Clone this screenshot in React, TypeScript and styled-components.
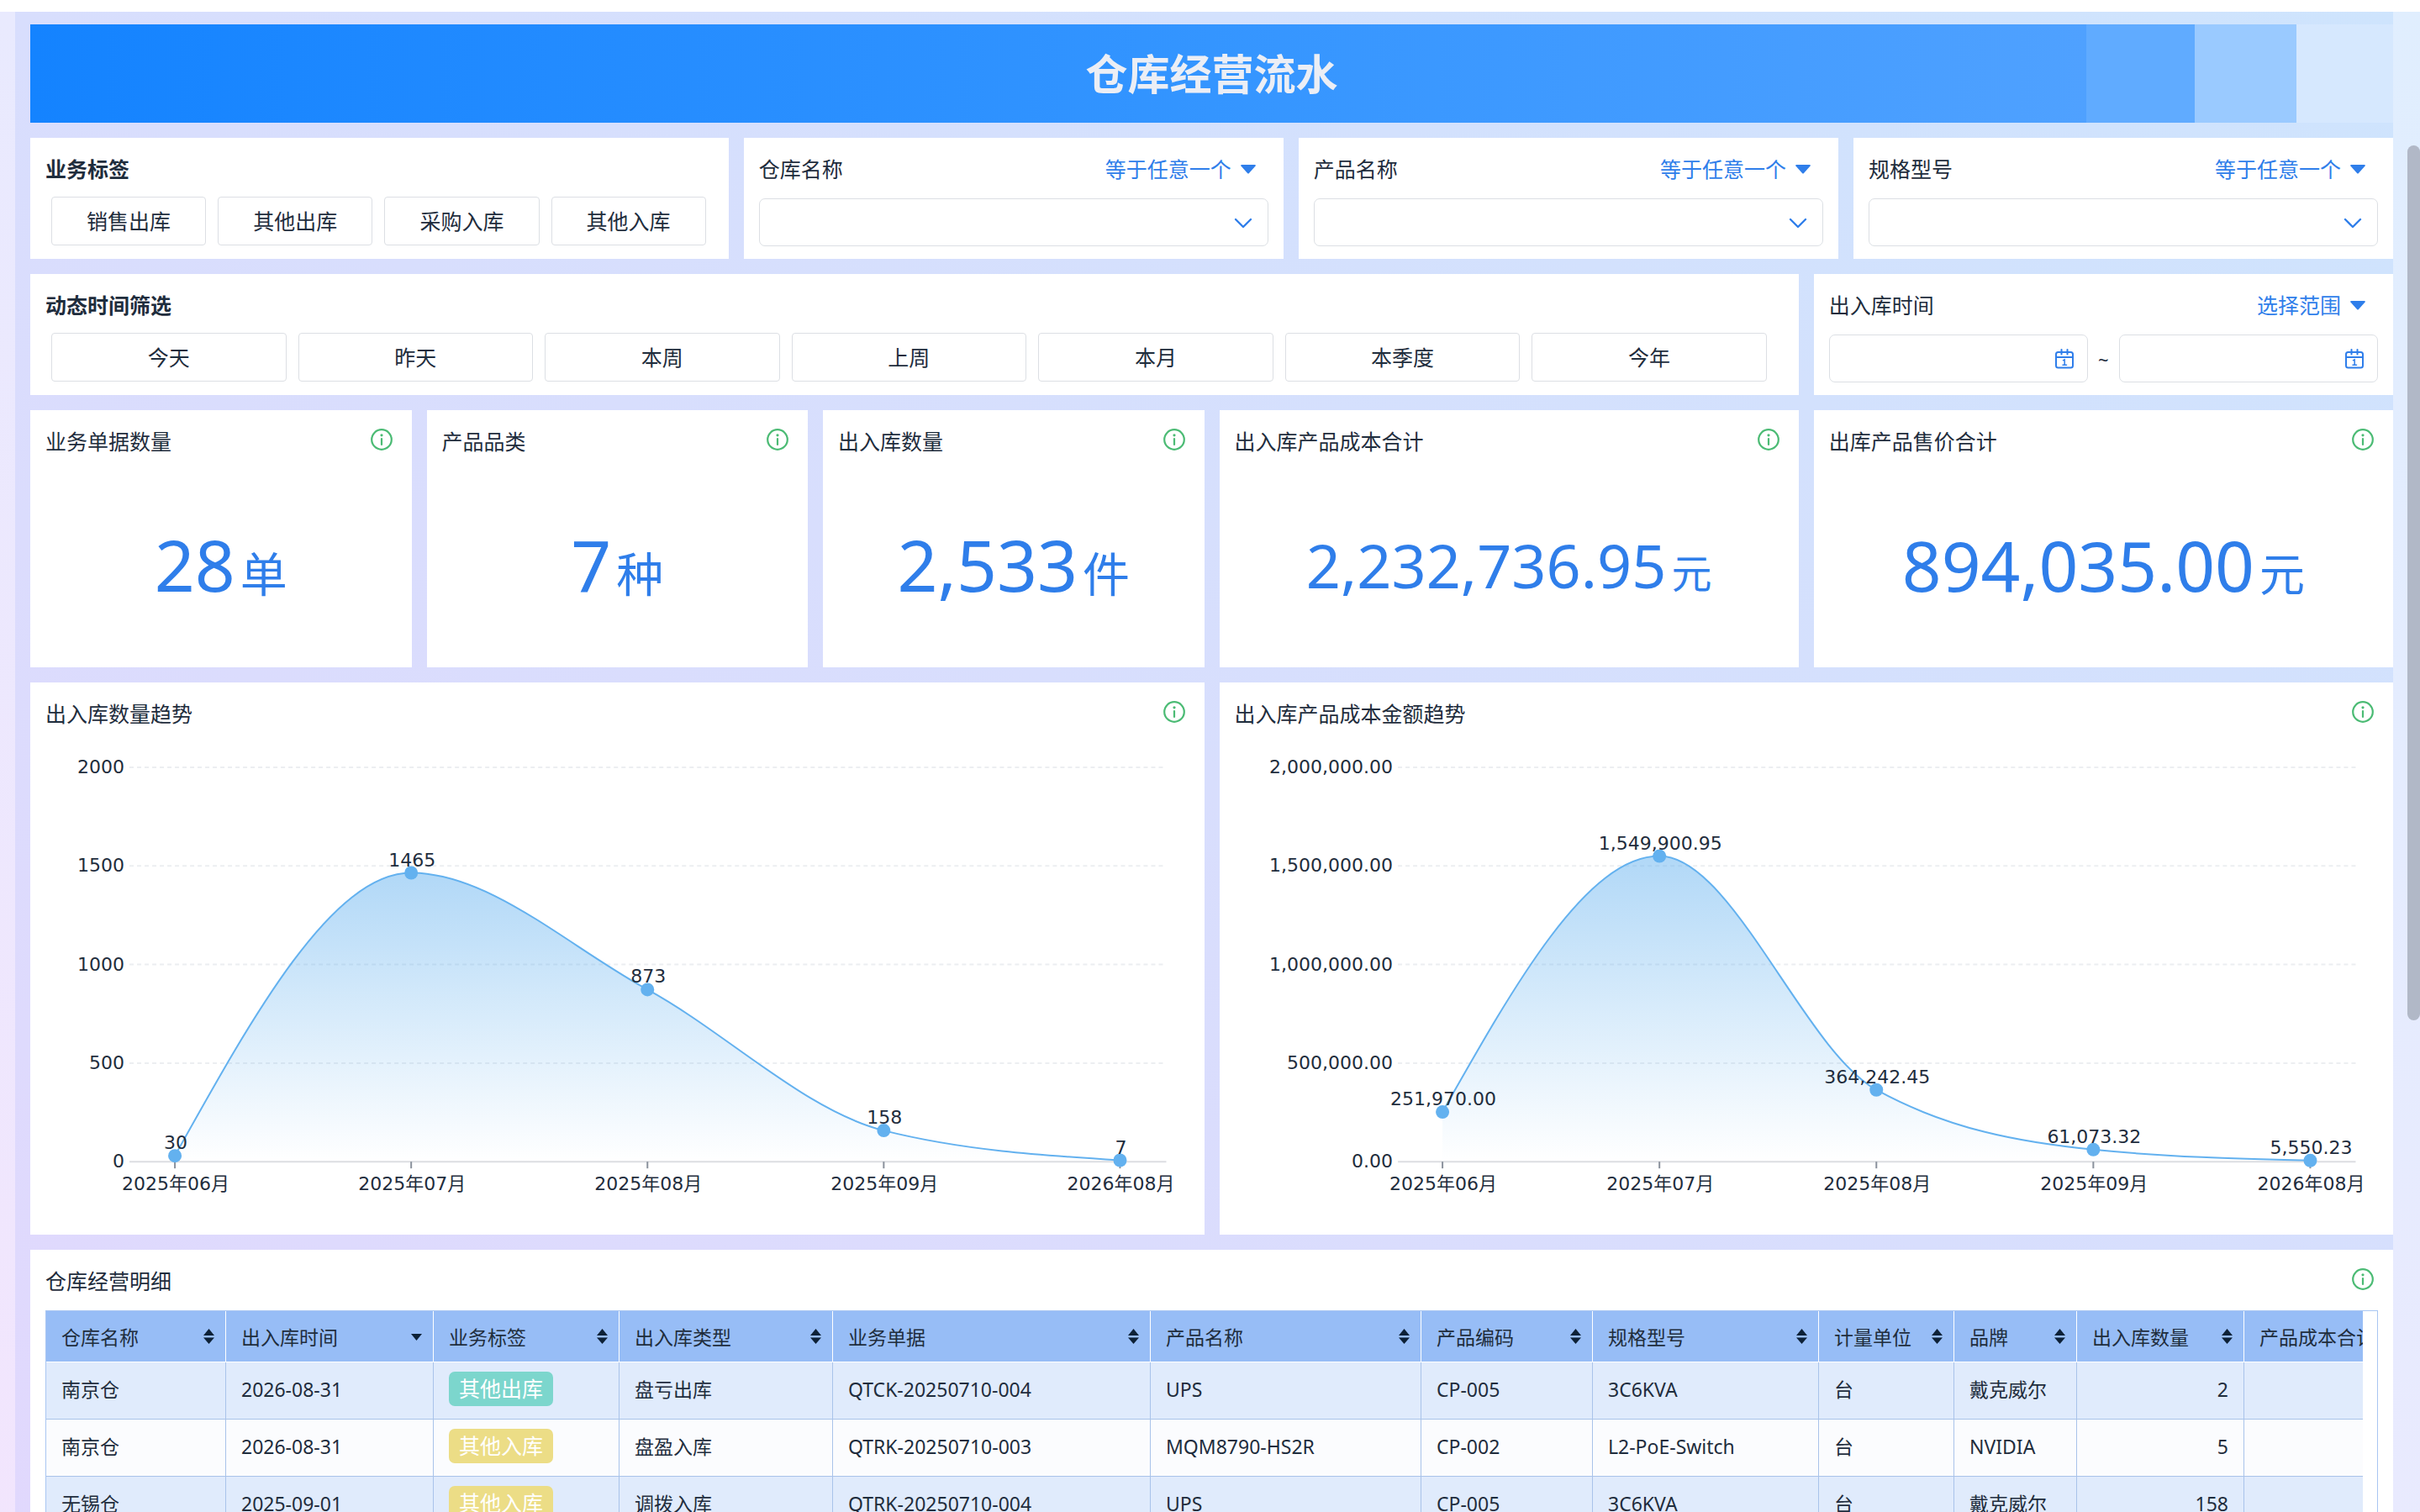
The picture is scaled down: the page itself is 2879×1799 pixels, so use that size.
import React, { useId } from "react";
import styled, { createGlobalStyle } from "styled-components";

const ink = "#1f2d3d";
const blue = "#2f7eea";
const line = "#dcdfe4";

const GlobalStyle = createGlobalStyle`
  *, *::before, *::after { box-sizing: border-box; }
  html, body, #root { height: 100%; }
  body {
    margin: 0;
    color: ${ink};
    font-family: "Noto Sans", "Noto Sans CJK SC", sans-serif;
    font-size: 25px;
    background: #fff;
    overflow: hidden;
  }
  button, input, select { font: inherit; color: inherit; margin: 0; }
`;

const Viewport = styled.div`
  position: relative;
  height: 100vh;
  padding-top: 14px;
  overflow: hidden;
`;

const Backdrop = styled.div`
  min-height: 100%;
  padding: 0 32px 0 18px;
  background: linear-gradient(to top right, #f2e5fd 0%, #e9eafe 50%, #e0eefe 100%);
`;

const Dashboard = styled.main`
  display: grid;
  grid-template-columns: repeat(60, minmax(0, 1fr));
  gap: 18px;
  min-height: 100vh;
  padding: 15px 0 0 18px;
  align-content: start;
  background: linear-gradient(to top right, #e1d8fd 0%, #d8defd 50%, #cee4fd 100%);
`;

const Banner = styled.header`
  grid-column: 1 / -1;
  display: flex;
  align-items: center;
  justify-content: center;
  height: 117px;
  background: linear-gradient(
    to right,
    #1483ff 0%,
    #3495ff 50%,
    #4fa1ff 87%,
    #60abff 87%,
    #60abff 91.6%,
    #9acaff 91.6%,
    #9acaff 95.9%,
    #d6e8fe 95.9%
  );
`;

const BannerTitle = styled.h1`
  margin: 0;
  font-size: 50px;
  line-height: 60px;
  font-weight: 700;
  color: #ebeef5;
`;

const Card = styled.section<{ $span: number }>`
  grid-column: span ${(p) => p.$span};
  display: flex;
  flex-direction: column;
  min-width: 0;
  background: #fff;
`;

const CardHead = styled.div`
  display: flex;
  align-items: flex-start;
  justify-content: space-between;
  height: 70px;
  padding: 0 23px 0 18px;
`;

const CardTitle = styled.h2<{ $strong?: boolean }>`
  margin: 0;
  font-size: 25px;
  line-height: 74px;
  font-weight: ${(p) => (p.$strong ? 700 : 400)};
  white-space: nowrap;
`;

const FieldLabel = styled.label`
  line-height: 74px;
`;

const Operator = styled.button`
  display: flex;
  align-items: center;
  gap: 10px;
  padding: 0 9px 0 0;
  border: 0;
  background: none;
  color: ${blue};
  line-height: 74px;
  cursor: pointer;
`;

const InfoButton = styled.button`
  display: flex;
  margin-top: 22px;
  padding: 0;
  border: 0;
  background: none;
  color: #4bbb74;
  cursor: pointer;
`;

const ButtonRow = styled.div<{ $end: number }>`
  display: flex;
  gap: 14px;
  padding: 0 ${(p) => p.$end}px 16px 25px;
`;

const Choice = styled.button`
  flex: 1 1 0;
  height: 58px;
  padding: 0;
  border: 1px solid ${line};
  border-radius: 4px;
  background: #fff;
  line-height: 56px;
  cursor: pointer;
`;

const FieldRow = styled.div`
  display: flex;
  align-items: center;
  padding: 2px 18px 15px;
`;

const Field = styled.div`
  flex: 1 1 0;
  min-width: 0;
  display: grid;
  align-items: center;
  > * { grid-area: 1 / 1; }
  > svg { justify-self: end; margin-right: 17px; color: ${blue}; pointer-events: none; }
`;

const SelectBox = styled.select`
  appearance: none;
  width: 100%;
  height: 57px;
  padding: 0 56px 0 16px;
  border: 1px solid ${line};
  border-radius: 7px;
  background: #fff;
`;

const DateBox = styled.input`
  width: 100%;
  height: 57px;
  padding: 0 52px 0 16px;
  border: 1px solid ${line};
  border-radius: 7px;
  background: #fff;
`;

const Tilde = styled.span`
  width: 37px;
  text-align: center;
  font-size: 22px;
`;

const Metric = styled.p<{ $size: number; $unit: number }>`
  display: flex;
  align-items: baseline;
  justify-content: center;
  gap: 6px;
  margin: 0;
  height: 236px;
  color: ${blue};
  font-size: ${(p) => p.$size}px;
  line-height: 228px;
  white-space: nowrap;
  small { font-size: ${(p) => p.$unit}px; line-height: 60px; }
`;

const ChartSvg = styled.svg`
  display: block;
  width: 100%;
  height: auto;
  text { font-family: "DejaVu Sans", "Noto Sans CJK SC", sans-serif; font-size: 22px; fill: ${ink}; }
`;

const TableFrame = styled.div`
  margin: 2px 18px 18px;
  padding-right: 17px;
  border: 1px solid #a9c6f2;
  border-bottom: 0;
`;

const TableScroll = styled.div`
  overflow: hidden;
`;

const DataTable = styled.table`
  table-layout: fixed;
  width: 2814px;
  border-collapse: separate;
  border-spacing: 0;
  font-size: 23px;
`;

const HeadCell = styled.th`
  height: 61px;
  padding: 0 13px 0 18px;
  border-right: 1px solid #fff;
  border-bottom: 1px solid #fff;
  background: #97bdf6;
  font-weight: 400;
  text-align: left;
`;

const HeadInner = styled.div`
  display: flex;
  align-items: center;
  justify-content: space-between;
  white-space: nowrap;
`;

const BodyRow = styled.tr`
  background: #fbfcfe;
  &:nth-child(odd) { background: #e0ebfc; }
`;

const Cell = styled.td<{ $right?: boolean }>`
  height: 68px;
  padding: 0 18px 4px;
  border-right: 1px solid #a9c3ea;
  border-bottom: 1px solid #a9c3ea;
  text-align: ${(p) => (p.$right ? "right" : "left")};
  line-height: 32px;
  white-space: nowrap;
`;

const Tag = styled.span<{ $tone: string }>`
  display: inline-block;
  height: 41px;
  padding: 0 12px;
  border-radius: 7px;
  background: ${(p) => p.$tone};
  color: #fff;
  font-size: 25px;
  line-height: 41px;
  vertical-align: middle;
`;

const ScrollThumb = styled.div`
  position: absolute;
  top: 173px;
  right: 0;
  width: 15px;
  height: 1041px;
  border-radius: 8px;
  background: #b1b8c7;
`;

const Caret = () => (
  <svg width="20" height="12" viewBox="0 0 20 12" aria-hidden="true">
    <path d="M2 1h16a1 1 0 0 1 .6 1.400L11 11a1.400 1.400 0 0 1-2 0L1.400 2.400A1 1 0 0 1 2 1z" fill="currentColor" />
  </svg>
);

const Chevron = () => (
  <svg width="26" height="26" viewBox="0 0 26 26" fill="none" aria-hidden="true">
    <path d="M4 9l9 9 9-9" stroke="currentColor" strokeWidth="2.400" strokeLinecap="round" strokeLinejoin="round" />
  </svg>
);

const CalendarIcon = () => (
  <svg width="22" height="24" viewBox="0 0 22 24" fill="none" stroke="currentColor" strokeWidth="2" strokeLinecap="round" aria-hidden="true">
    <rect x="1" y="4" width="20" height="18.500" rx="2.500" />
    <path d="M1 10h20M7.500 1v5.500M14.500 1v5.500" />
    <path d="M9.500 13.800l1.700-.8v6.300M9 19.300h4.500" strokeWidth="1.500" />
  </svg>
);

const InfoIcon = () => (
  <svg width="26" height="26" viewBox="0 0 26 26" fill="none" aria-hidden="true">
    <circle cx="13" cy="13" r="11.800" stroke="currentColor" strokeWidth="2.200" />
    <circle cx="13" cy="7.800" r="1.600" fill="currentColor" />
    <path d="M13 12v7" stroke="currentColor" strokeWidth="2.200" strokeLinecap="round" />
  </svg>
);

const SortIcon = ({ down }: { down?: boolean }) => (
  <svg width="13" height="18" viewBox="0 0 13 18" fill="#0d2137" aria-hidden="true">
    {down ? (
      <path d="M0 6h13L6.500 14z" />
    ) : (
      <>
        <path d="M0 8h13L6.500 0z" />
        <path d="M0 10.500h13L6.500 18z" />
      </>
    )}
  </svg>
);

type Point = { x: number; y: number };

/* Monotone cubic through the points: it never overshoots a neighbour. */
function smoothPath(pts: Point[]) {
  const n = pts.length;
  const h = pts.slice(1).map((p, i) => p.x - pts[i].x);
  const s = pts.slice(1).map((p, i) => (p.y - pts[i].y) / h[i]);
  const t = pts.map((_, i) => {
    if (i === 0 || i === n - 1) return 0;
    const a = s[i - 1];
    const b = s[i];
    const mean = (a * h[i] + b * h[i - 1]) / (h[i] + h[i - 1]);
    return (Math.sign(a) + Math.sign(b)) * Math.min(Math.abs(a), Math.abs(b), Math.abs(mean) / 2);
  });
  t[0] = (3 * s[0] - t[1]) / 2;
  t[n - 1] = (3 * s[n - 2] - t[n - 2]) / 2;
  let d = `M${pts[0].x} ${pts[0].y}`;
  for (let i = 1; i < n; i++) {
    const a = pts[i - 1];
    const b = pts[i];
    const k = h[i - 1] / 3;
    d += ` C${a.x + k} ${a.y + k * t[i - 1]} ${b.x - k} ${b.y - k * t[i]} ${b.x} ${b.y}`;
  }
  return d;
}

type ChartProps = {
  label: string;
  left: number;
  first: number;
  step: number;
  max: number;
  ticks: string[];
  values: number[];
  format: (n: number) => string;
};

const months = ["2025年06月", "2025年07月", "2025年08月", "2025年09月", "2026年08月"];

function AreaChart({ label, left, first, step, max, ticks, values, format }: ChartProps) {
  const id = useId();
  const top = 31;
  const base = 500;
  const right = 1351;
  const pts = values.map((v, i) => ({
    x: first + i * step,
    y: base - (v / max) * (base - top),
  }));
  const curve = smoothPath(pts);
  return (
    <ChartSvg viewBox="0 0 1396 587" role="img" aria-label={label}>
      <defs>
        <linearGradient id={id} x1="0" y1="0" x2="0" y2="1">
          <stop offset="0" stopColor="#63b1ef" stopOpacity="0.5" />
          <stop offset="1" stopColor="#63b1ef" stopOpacity="0" />
        </linearGradient>
      </defs>
      {ticks.map((t, i) => {
        const y = top + (i * (base - top)) / (ticks.length - 1);
        const last = i === ticks.length - 1;
        return (
          <g key={t}>
            <line x1={left} x2={right} y1={y} y2={y} stroke={last ? "#dcdee2" : "#eceef1"} strokeWidth="2" strokeDasharray={last ? undefined : "5 4"} />
            <text x={left - 6} y={y + 7} textAnchor="end">{t}</text>
          </g>
        );
      })}
      <path d={`${curve} L${pts[pts.length - 1].x} ${base} L${pts[0].x} ${base} Z`} fill={`url(#${id})`} />
      {pts.map((p, i) => (
        <g key={i}>
          <line x1={p.x} x2={p.x} y1={base} y2={base + 8} stroke="#8a919c" strokeWidth="2" />
          <text x={p.x + 1} y={base + 34} textAnchor="middle">{months[i]}</text>
        </g>
      ))}
      <path d={curve} fill="none" stroke="#63b1ef" strokeWidth="2" />
      {pts.map((p, i) => (
        <circle key={i} cx={p.x} cy={p.y} r="8" fill="#63b1ef" />
      ))}
      {pts.map((p, i) => (
        <text key={i} x={p.x + 1} y={p.y - 8} textAnchor="middle">{format(values[i])}</text>
      ))}
    </ChartSvg>
  );
}

const money = (n: number) => n.toLocaleString("en-US", { minimumFractionDigits: 2 });

const Info = ({ about }: { about: string }) => (
  <InfoButton type="button" aria-label={`${about}说明`}>
    <InfoIcon />
  </InfoButton>
);

const SelectFilter = ({ id, name }: { id: string; name: string }) => (
  <Card $span={14}>
    <CardHead>
      <FieldLabel htmlFor={id}>{name}</FieldLabel>
      <Operator type="button">等于任意一个<Caret /></Operator>
    </CardHead>
    <FieldRow>
      <Field>
        <SelectBox id={id} defaultValue=""><option value="" /></SelectBox>
        <Chevron />
      </Field>
    </FieldRow>
  </Card>
);

const metrics = [
  { title: "业务单据数量", value: "28", unit: "单", span: 10, size: 84, small: 56 },
  { title: "产品品类", value: "7", unit: "种", span: 10, size: 84, small: 56 },
  { title: "出入库数量", value: "2,533", unit: "件", span: 10, size: 84, small: 56 },
  { title: "出入库产品成本合计", value: "2,232,736.95", unit: "元", span: 15, size: 72, small: 48 },
  { title: "出库产品售价合计", value: "894,035.00", unit: "元", span: 15, size: 82, small: 54 },
];

const columns: [string, number][] = [
  ["仓库名称", 214], ["出入库时间", 247], ["业务标签", 221], ["出入库类型", 254],
  ["业务单据", 378], ["产品名称", 322], ["产品编码", 204], ["规格型号", 269],
  ["计量单位", 161], ["品牌", 146], ["出入库数量", 199], ["产品成本合计", 199],
];

const teal = "#7cd6cd";
const yellow = "#ecdd86";

const rows = [
  { tone: teal, cells: ["南京仓", "2026-08-31", "其他出库", "盘亏出库", "QTCK-20250710-004", "UPS", "CP-005", "3C6KVA", "台", "戴克威尔", "2", ""] },
  { tone: yellow, cells: ["南京仓", "2026-08-31", "其他入库", "盘盈入库", "QTRK-20250710-003", "MQM8790-HS2R", "CP-002", "L2-PoE-Switch", "台", "NVIDIA", "5", ""] },
  { tone: yellow, cells: ["无锡仓", "2025-09-01", "其他入库", "调拨入库", "QTRK-20250710-004", "UPS", "CP-005", "3C6KVA", "台", "戴克威尔", "158", ""] },
];

export default function App() {
  return (
    <Viewport>
      <GlobalStyle />
      <Backdrop>
        <Dashboard>
          <Banner><BannerTitle>仓库经营流水</BannerTitle></Banner>

          <Card $span={18}>
            <CardHead><CardTitle $strong>业务标签</CardTitle></CardHead>
            <ButtonRow $end={27}>
              {["销售出库", "其他出库", "采购入库", "其他入库"].map((t) => (
                <Choice type="button" key={t}>{t}</Choice>
              ))}
            </ButtonRow>
          </Card>
          <SelectFilter id="warehouse" name="仓库名称" />
          <SelectFilter id="product" name="产品名称" />
          <SelectFilter id="model" name="规格型号" />

          <Card $span={45}>
            <CardHead><CardTitle $strong>动态时间筛选</CardTitle></CardHead>
            <ButtonRow $end={38}>
              {["今天", "昨天", "本周", "上周", "本月", "本季度", "今年"].map((t) => (
                <Choice type="button" key={t}>{t}</Choice>
              ))}
            </ButtonRow>
          </Card>
          <Card $span={15}>
            <CardHead>
              <FieldLabel htmlFor="date-from">出入库时间</FieldLabel>
              <Operator type="button">选择范围<Caret /></Operator>
            </CardHead>
            <FieldRow>
              <Field><DateBox id="date-from" type="text" /><CalendarIcon /></Field>
              <Tilde>~</Tilde>
              <Field><DateBox type="text" aria-label="结束时间" /><CalendarIcon /></Field>
            </FieldRow>
          </Card>

          {metrics.map((m) => (
            <Card $span={m.span} key={m.title}>
              <CardHead><CardTitle>{m.title}</CardTitle><Info about={m.title} /></CardHead>
              <Metric $size={m.size} $unit={m.small}>{m.value}<small>{m.unit}</small></Metric>
            </Card>
          ))}

          <Card $span={30}>
            <CardHead><CardTitle>出入库数量趋势</CardTitle><Info about="出入库数量趋势" /></CardHead>
            <AreaChart
              label="出入库数量趋势" left={118} first={172} step={281} max={2000}
              ticks={["2000", "1500", "1000", "500", "0"]}
              values={[30, 1465, 873, 158, 7]} format={String}
            />
          </Card>
          <Card $span={30}>
            <CardHead><CardTitle>出入库产品成本金额趋势</CardTitle><Info about="出入库产品成本金额趋势" /></CardHead>
            <AreaChart
              label="出入库产品成本金额趋势" left={212} first={265} step={258} max={2000000}
              ticks={[2000000, 1500000, 1000000, 500000, 0].map(money)}
              values={[251970, 1549900.95, 364242.45, 61073.32, 5550.23]} format={money}
            />
          </Card>

          <Card $span={60}>
            <CardHead><CardTitle>仓库经营明细</CardTitle><Info about="仓库经营明细" /></CardHead>
            <TableFrame>
              <TableScroll>
                <DataTable>
                  <colgroup>{columns.map(([n, w]) => <col key={n} width={w} />)}</colgroup>
                  <thead>
                    <tr>
                      {columns.map(([n]) => (
                        <HeadCell key={n} scope="col">
                          <HeadInner>{n}<SortIcon down={n === "出入库时间"} /></HeadInner>
                        </HeadCell>
                      ))}
                    </tr>
                  </thead>
                  <tbody>
                    {rows.map((r, i) => (
                      <BodyRow key={i}>
                        {r.cells.map((c, j) => (
                          <Cell key={j} $right={j >= 10}>
                            {j === 2 ? <Tag $tone={r.tone}>{c}</Tag> : c}
                          </Cell>
                        ))}
                      </BodyRow>
                    ))}
                  </tbody>
                </DataTable>
              </TableScroll>
            </TableFrame>
          </Card>
        </Dashboard>
      </Backdrop>
      <ScrollThumb />
    </Viewport>
  );
}
